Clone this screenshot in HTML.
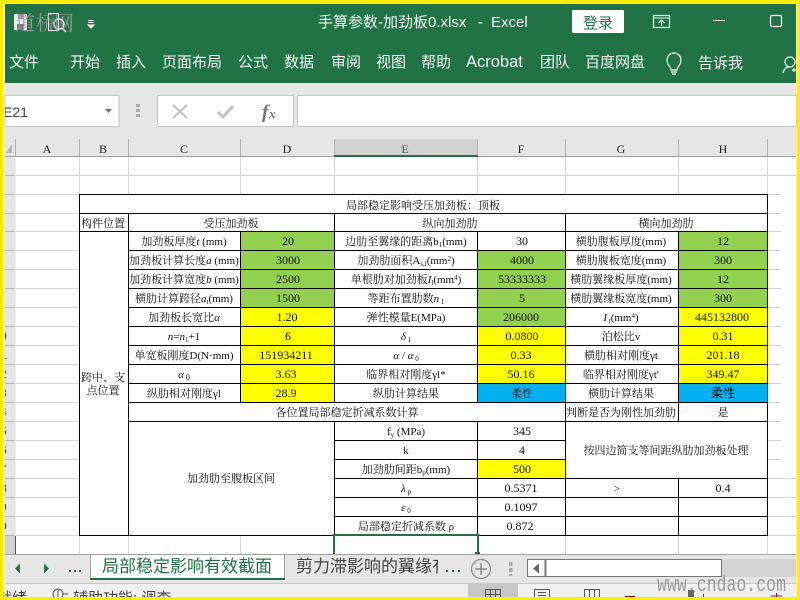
<!DOCTYPE html>
<html lang="zh">
<head>
<meta charset="utf-8">
<title>手算参数-加劲板0.xlsx - Excel</title>
<style>
html,body{margin:0;padding:0;width:800px;height:600px;overflow:hidden;background:#fff}
svg{display:block}
.ui{font-family:"Liberation Sans","Noto Sans CJK SC",sans-serif}
.c text{font-family:"Liberation Serif","Noto Serif CJK SC",serif;font-size:11px;fill:#111;text-anchor:middle}
.c text.n{font-size:12px}
.i{font-style:italic}
.hd{font-family:"Liberation Serif","Noto Serif CJK SC",serif;font-size:12px;fill:#222;text-anchor:middle}
.rib{font-family:"Liberation Sans","Noto Sans CJK SC",sans-serif;font-size:15px;fill:#f2f7f4}
</style>
</head>
<body>
<svg width="800" height="600" viewBox="0 0 800 600" xmlns="http://www.w3.org/2000/svg">
<defs><clipPath id="cname"><rect x="5" y="95" width="100" height="32"/></clipPath>
<clipPath id="ctab"><rect x="286" y="555" width="152" height="24"/></clipPath>
<clipPath id="crow"><rect x="5" y="157" width="10" height="378"/></clipPath>
<clipPath id="cst"><rect x="0" y="584" width="796" height="13"/></clipPath></defs>
<rect width="800" height="600" fill="#fff"/>
<!-- title bar -->
<rect x="5" y="4" width="791" height="79" fill="#217346"/>
<rect x="14" y="14" width="13" height="16" fill="#e8e8e8"/>
<rect x="18" y="14" width="6" height="5" fill="#999"/>
<rect x="17" y="24" width="7" height="6" fill="#777"/>
<path d="M48.500 13.500h10v17h-10z" fill="none" stroke="#fff"/>
<circle cx="59" cy="24" r="5" fill="none" stroke="#fff" stroke-width="1.300"/>
<path d="M62 28l4 4" stroke="#fff" stroke-width="1.500"/>
<text x="15 36 54" y="30" font-size="20" fill="#a0a0a0" opacity=".85" font-family="'Noto Serif CJK SC',serif">道桥网</text>
<path d="M88 20.500h6M88 22.500h6M88 25l3 3 3-3z" stroke="#fff" fill="#fff" stroke-width="1"/>
<text x="318" y="27" class="rib">手算参数-加劲板0.xlsx</text>
<text x="478" y="27" class="rib">-</text>
<text x="491" y="27" class="rib">Excel</text>
<rect x="572" y="10" width="52" height="23" rx="1" fill="#fff"/>
<text x="598" y="28" class="ui" font-size="15" fill="#217346" text-anchor="middle">登录</text>
<rect x="653.500" y="15.500" width="16" height="12" fill="none" stroke="#e8f0ec" stroke-width="1.200"/>
<path d="M653 18h17M661.500 26v-6M658.500 23l3-3 3 3" fill="none" stroke="#e8f0ec"/>
<path d="M713 20.500h12" stroke="#fff" stroke-width="1"/>
<rect x="770.500" y="15.500" width="11" height="11" rx="1.500" fill="none" stroke="#fff" stroke-width="1.200"/>
<text x="9" y="67" class="rib">文件</text>
<text x="70" y="67" class="rib">开始</text>
<text x="116" y="67" class="rib">插入</text>
<text x="162" y="67" class="rib">页面布局</text>
<text x="238" y="67" class="rib">公式</text>
<text x="284" y="67" class="rib">数据</text>
<text x="331" y="67" class="rib">审阅</text>
<text x="376" y="67" class="rib">视图</text>
<text x="421" y="67" class="rib">帮助</text>
<text x="466" y="67" class="rib" style="font-size:16.500px">Acrobat</text>
<text x="540" y="67" class="rib">团队</text>
<text x="585" y="67" class="rib">百度网盘</text>
<path d="M671 70c0-3-4-5-4-10a7 7 0 0 1 14 0c0 5-4 7-4 10zM671 72h6M672 74h4" fill="none" stroke="#f2f7f4" stroke-width="1.200"/>
<text x="698" y="68" class="rib">告诉我</text>
<circle cx="790" cy="62" r="5" fill="none" stroke="#f2f7f4" stroke-width="1.200"/>
<path d="M783 73c1-4 3-6 6-6M792 70h4M794 68v4" fill="none" stroke="#f2f7f4" stroke-width="1.200"/>
<!-- formula bar -->
<rect x="5" y="83" width="791" height="56" fill="#e6e6e6"/>
<rect x="5" y="95.500" width="114" height="31" fill="#fff" stroke="#c6c6c6"/>
<text x="3" y="117" class="ui" font-size="14" fill="#444" clip-path="url(#cname)">E21</text>
<path d="M105 109h7l-3.500 4z" fill="#777"/>
<path d="M136 104h4v3h-4zM136 109h4v3h-4zM136 114h4v3h-4z" fill="#aaa"/>
<rect x="157.500" y="95.500" width="136" height="31" fill="#fff" stroke="#c6c6c6"/>
<path d="M173 105l14 13M187 105l-14 13" stroke="#c0c0c0" stroke-width="2" fill="none"/>
<path d="M218 112l5 5 10-11" stroke="#c0c0c0" stroke-width="3" fill="none"/>
<text x="262" y="118" font-family="'Liberation Serif',serif" font-style="italic" font-weight="bold" font-size="19" fill="#777">f</text>
<text x="269" y="118" font-family="'Liberation Serif',serif" font-style="italic" font-weight="bold" font-size="13" fill="#777">x</text>
<rect x="297.500" y="95.500" width="499" height="31" fill="#fff" stroke="#c6c6c6"/>
<!-- headers -->
<rect x="5" y="139" width="791" height="18" fill="#e6e6e6"/>
<rect x="5" y="157" width="10.500" height="397" fill="#e6e6e6"/>
<rect x="334" y="139" width="144" height="17" fill="#d2d2d2"/>
<path d="M12 144v9h-6z" fill="#b4b4b4"/>
<g stroke="#b4b4b4" shape-rendering="crispEdges">
<path d="M15.500 139v18M79.500 139v18M128.500 139v18M240.500 139v18M334.500 139v18M477.500 139v18M565.500 139v18M678.500 139v18M767.500 139v18"/>
<path d="M5 175.500h10M5 194.500h10M5 213.500h10M5 231.500h10M5 250.500h10M5 269.500h10M5 288.500h10M5 307.500h10M5 326.500h10M5 345.500h10M5 364.500h10M5 383.500h10M5 402.500h10M5 421.500h10M5 440.500h10M5 459.500h10M5 478.500h10M5 497.500h10M5 516.500h10M5 535.500h10"/>
</g>
<path d="M5 156.500h791" stroke="#a0a0a0" shape-rendering="crispEdges"/>
<rect x="334" y="155" width="144" height="2" fill="#217346"/>
<text class="hd" x="47" y="153">A</text><text class="hd" x="103" y="153">B</text><text class="hd" x="184" y="153">C</text><text class="hd" x="287" y="153">D</text><text class="hd" x="405" y="153" style="fill:#217346">E</text><text class="hd" x="521" y="153">F</text><text class="hd" x="621" y="153">G</text><text class="hd" x="723" y="153">H</text>
<g clip-path="url(#crow)" font-family="'Liberation Mono',monospace" font-size="12" fill="#333" text-anchor="end">
<text x="7" y="340">0</text><text x="7" y="359">1</text><text x="7" y="378">2</text><text x="7" y="397">3</text><text x="7" y="416">4</text><text x="7" y="435">5</text><text x="7" y="454">6</text><text x="7" y="473">7</text><text x="7" y="492">8</text><text x="7" y="511">9</text><text x="7" y="530">0</text>
</g>
<!-- grey grid -->
<g stroke="#d4d4d4" shape-rendering="crispEdges">
<path d="M15 175.500h781M15 194.500h64M15 213.500h64M15 231.500h64M15 250.500h64M15 269.500h64M15 288.500h64M15 307.500h64M15 326.500h64M15 345.500h64M15 364.500h64M15 383.500h64M15 402.500h64M15 421.500h64M15 440.500h64M15 459.500h64M15 478.500h64M15 497.500h64M15 516.500h64M15 535.500h64"/>
<path d="M767 194.500h14M767 213.500h14M767 231.500h14M767 250.500h14M767 269.500h14M767 288.500h14M767 307.500h14M767 326.500h14M767 345.500h14M767 364.500h14M767 383.500h14M767 402.500h14M767 421.500h14M767 440.500h14M767 459.500h14M767 478.500h29M767 497.500h29M767 516.500h29M767 535.500h29"/>
<path d="M79.500 157v37M128.500 157v37M240.500 157v37M334.500 157v37M477.500 157v37M565.500 157v37M678.500 157v37M767.500 157v37"/>
<path d="M79.500 535v19M128.500 535v19M240.500 535v19M565.500 535v19M678.500 535v19M767.500 535v19"/>
</g>
<!-- fills -->
<g shape-rendering="crispEdges">
<rect x="240" y="231" width="94" height="76" fill="#92d050"/>
<rect x="240" y="307" width="94" height="95" fill="#ffff00"/>
<rect x="477" y="250" width="88" height="76" fill="#92d050"/>
<rect x="477" y="326" width="88" height="57" fill="#ffff00"/>
<rect x="477" y="383" width="88" height="19" fill="#00b0f0"/>
<rect x="477" y="459" width="88" height="19" fill="#ffff00"/>
<rect x="678" y="231" width="89" height="76" fill="#92d050"/>
<rect x="678" y="307" width="89" height="76" fill="#ffff00"/>
<rect x="678" y="383" width="89" height="19" fill="#00b0f0"/>
</g>
<!-- black lines -->
<g stroke="#000" shape-rendering="crispEdges" fill="none">
<path d="M79 194.500h689M79 213.500h689M79 231.500h689M128 250.500h640M128 269.500h640M128 288.500h640M128 307.500h640M128 326.500h640M128 345.500h640M128 364.500h640M128 383.500h640M128 402.500h640M128 421.500h640M334 440.500h231M334 459.500h231M334 478.500h434M334 497.500h434M334 516.500h434M79 535.500h689"/>
<path d="M79.500 194v342M767.500 194v342M128.500 213v323M240.500 231v171M334.500 213v189M334.500 421v115M477.500 231v171M477.500 421v115M565.500 213v323M678.500 231v190M678.500 478v58"/>
</g>
<!-- text -->
<g class="c">
<text x="423" y="209">局部稳定影响受压加劲板：顶板</text>
<text x="103" y="227">构件位置</text><text x="231" y="227">受压加劲板</text><text x="450" y="227">纵向加劲肋</text><text x="666" y="227">横向加劲肋</text>
<text x="184" y="245">加劲板厚度<tspan class="i">t</tspan> (mm)</text>
<text x="184" y="264">加劲板计算长度<tspan class="i">a</tspan> (mm)</text>
<text x="184" y="283">加劲板计算宽度<tspan class="i">b</tspan> (mm)</text>
<text x="184" y="302">横肋计算跨径<tspan class="i">a</tspan><tspan font-size="7" dy="2">t</tspan><tspan dy="-2">(mm)</tspan></text>
<text x="184" y="321">加劲板长宽比<tspan class="i">α</tspan></text>
<text x="184" y="340"><tspan class="i">n</tspan>=<tspan class="i">n</tspan><tspan font-size="7" dy="2">1</tspan><tspan dy="-2">+1</tspan></text>
<text x="184" y="359">单宽板刚度D(N·mm)</text>
<text x="184" y="378"><tspan class="i">α</tspan><tspan font-size="8" dy="2"> 0</tspan></text>
<text x="184" y="397">纵肋相对刚度γl</text>
<text class="n" x="288" y="245">20</text><text class="n" x="288" y="264">3000</text><text class="n" x="288" y="283">2500</text><text class="n" x="288" y="302">1500</text><text class="n" x="287" y="321">1.20</text><text class="n" x="288" y="340">6</text><text class="n" x="286" y="359">151934211</text><text class="n" x="286" y="378">3.63</text><text class="n" x="286" y="397">28.9</text>
<text x="406" y="245">边肋至翼缘的距离b<tspan font-size="7" dy="2">1</tspan><tspan dy="-2">(mm)</tspan></text>
<text x="406" y="264">加劲肋面积A<tspan font-size="7" dy="2">s,l</tspan><tspan dy="-2">(mm</tspan><tspan font-size="7" dy="-3">2</tspan><tspan dy="3">)</tspan></text>
<text x="406" y="283">单根肋对加劲板<tspan class="i">I</tspan><tspan font-size="7" dy="2">l</tspan><tspan dy="-2">(mm</tspan><tspan font-size="7" dy="-3">4</tspan><tspan dy="3">)</tspan></text>
<text x="406" y="302">等距布置肋数<tspan class="i">n</tspan><tspan font-size="7" dy="2"> 1</tspan></text>
<text x="406" y="321">弹性模量E(MPa)</text>
<text x="406" y="340"><tspan class="i">δ</tspan><tspan font-size="7" dy="2"> 1</tspan></text>
<text x="406" y="359"><tspan class="i">α</tspan> / <tspan class="i">α</tspan><tspan font-size="7" dy="2"> 0</tspan></text>
<text x="406" y="378">临界相对刚度γl*</text>
<text x="406" y="397">纵肋计算结果</text>
<text class="n" x="522" y="245">30</text><text class="n" x="522" y="264">4000</text><text class="n" x="522" y="283">53333333</text><text class="n" x="522" y="302">5</text><text class="n" x="521" y="321">206000</text><text class="n" x="522" y="340">0.0800</text><text class="n" x="521" y="359">0.33</text><text class="n" x="521" y="378">50.16</text><text x="522" y="397">柔性</text>
<text x="621" y="245">横肋腹板厚度(mm)</text><text x="621" y="264">横肋腹板宽度(mm)</text><text x="621" y="283">横肋翼缘板厚度(mm)</text><text x="621" y="302">横肋翼缘板宽度(mm)</text>
<text x="621" y="321"><tspan class="i">I</tspan><tspan font-size="7" dy="2"> t</tspan><tspan dy="-2">(mm</tspan><tspan font-size="7" dy="-3">4</tspan><tspan dy="3">)</tspan></text>
<text x="621" y="340">泊松比v</text><text x="621" y="359">横肋相对刚度γt</text><text x="621" y="378">临界相对刚度γt′</text><text x="621" y="397">横肋计算结果</text>
<text class="n" x="723" y="245">12</text><text class="n" x="723" y="264">300</text><text class="n" x="723" y="283">12</text><text class="n" x="723" y="302">300</text><text class="n" x="722" y="321">445132800</text><text class="n" x="723" y="340">0.31</text><text class="n" x="723" y="359">201.18</text><text class="n" x="723" y="378">349.47</text><text x="723" y="397" style="font-size:12px;font-family:'Noto Sans CJK SC',sans-serif">柔性</text>
<text x="347" y="416">各位置局部稳定折减系数计算</text><text x="621" y="416">判断是否为刚性加劲肋</text><text x="723" y="416">是</text>
<text x="103" y="381">跨中、支</text><text x="103" y="394">点位置</text>
<text x="231" y="482">加劲肋至腹板区间</text>
<text x="406" y="435">f<tspan font-size="7" dy="2">y</tspan><tspan dy="-2"> (MPa)</tspan></text><text x="406" y="454">k</text><text x="406" y="473">加劲肋间距b<tspan font-size="7" dy="2">p</tspan><tspan dy="-2">(mm)</tspan></text>
<text x="406" y="492"><tspan class="i">λ</tspan><tspan font-size="7" dy="2"> p</tspan></text><text x="406" y="511"><tspan class="i">ε</tspan><tspan font-size="7" dy="2"> 0</tspan></text><text x="406" y="530">局部稳定折减系数 ρ</text>
<text class="n" x="522" y="435">345</text><text class="n" x="522" y="454">4</text><text class="n" x="522" y="473">500</text><text class="n" x="521" y="492">0.5371</text><text class="n" x="521" y="511">0.1097</text><text class="n" x="520" y="530">0.872</text>
<text x="666" y="454">按四边简支等间距纵肋加劲板处理</text>
<text x="617" y="492">&gt;</text><text class="n" x="723" y="492">0.4</text>
</g>
<!-- selected cell -->
<rect x="5" y="536" width="10" height="18" fill="#d2d2d2"/>
<rect x="15" y="536" width="1" height="18" fill="#217346"/>
<path d="M334 554v-19h144v17" fill="none" stroke="#217346" stroke-width="2"/>
<rect x="475" y="552" width="5" height="2" fill="#217346"/>
<!-- tabs -->
<rect x="5" y="554" width="791" height="30" fill="#e6e6e6"/>
<path d="M5 554.500h791" stroke="#a0a0a0" shape-rendering="crispEdges"/>
<rect x="90" y="555" width="195" height="24" fill="#fff"/>
<path d="M90.500 555v25M284.500 555v25" stroke="#a0a0a0" shape-rendering="crispEdges"/>
<rect x="90" y="578" width="195" height="2" fill="#217346"/>
<path d="M20 563.500v10l-5-5zM44 563.500v10l5-5z" fill="#217346"/>
<rect x="69" y="570" width="2" height="2" fill="#217346"/><rect x="74" y="570" width="2" height="2" fill="#217346"/><rect x="79" y="570" width="2" height="2" fill="#217346"/>
<text x="102" y="572" class="ui" font-size="17" fill="#217346">局部稳定影响有效截面</text>
<text x="296" y="572" class="ui" font-size="17" fill="#444" clip-path="url(#ctab)">剪力滞影响的翼缘有效宽度</text>
<rect x="446" y="570" width="2" height="2" fill="#217346"/><rect x="452" y="570" width="2" height="2" fill="#217346"/><rect x="458" y="570" width="2" height="2" fill="#217346"/>
<circle cx="481" cy="569" r="9.500" fill="none" stroke="#8a8a8a" stroke-width="1.200"/>
<path d="M481 563v12M475 569h12" stroke="#8a8a8a" stroke-width="1.500"/>
<path d="M509 562h3.500v4h-3.500zM509 568h3.500v4h-3.500zM509 574h3.500v2h-3.500z" fill="#aaa"/>
<rect x="722" y="559" width="74" height="18" fill="#d4d4d4"/>
<rect x="527.500" y="559.500" width="194" height="17" fill="#fff" stroke="#777"/>
<path d="M545.500 559v18" stroke="#777" stroke-width="2"/>
<path d="M533 568.500l6-5v10z" fill="#666"/>
<!-- status bar -->
<rect x="5" y="583" width="791" height="14" fill="#f1f1f1"/>
<path d="M5 583.500h791" stroke="#c8c8c8" shape-rendering="crispEdges"/>
<rect x="468" y="584" width="50" height="13" fill="#c6c6c6"/>
<g clip-path="url(#cst)">
<text x="-3" y="603" class="ui" font-size="15" fill="#444">就绪</text>
<text x="73" y="603" class="ui" font-size="15" fill="#444">辅助功能: 调查</text>
<circle cx="58" cy="594" r="5" fill="none" stroke="#555"/><path d="M58 589v12M62 594h6" stroke="#555"/>
<path d="M485.500 589.500h15v12h-15zM485.500 594.500h15M490.500 589v12M495.500 589v12" fill="none" stroke="#555"/>
<path d="M534.500 589.500h15v12h-15zM538 592.500h8M538 595.500h8" fill="none" stroke="#555"/>
<path d="M584.500 589.500h15v12h-15zM589.500 589v12M594.500 589v12" fill="none" stroke="#555"/>
<rect x="625" y="596" width="10" height="2" fill="#7a1a1a"/>
<rect x="688" y="590" width="6" height="8" fill="#666"/>
<path d="M703.500 594v4M776.500 593v5M771 596h11" stroke="#7a1a1a"/>
</g>
<text x="657" y="591" font-family="'Liberation Mono',monospace" font-size="22" fill="#8c8c8c" opacity=".85" textLength="129" lengthAdjust="spacingAndGlyphs">www.cndao.com</text>
<!-- yellow frame -->
<path d="M0 0h800v600H0zM3.500 3.500v593.500h793V3.500z" fill="#ffee00" fill-rule="evenodd"/>
</svg>
</body>
</html>
